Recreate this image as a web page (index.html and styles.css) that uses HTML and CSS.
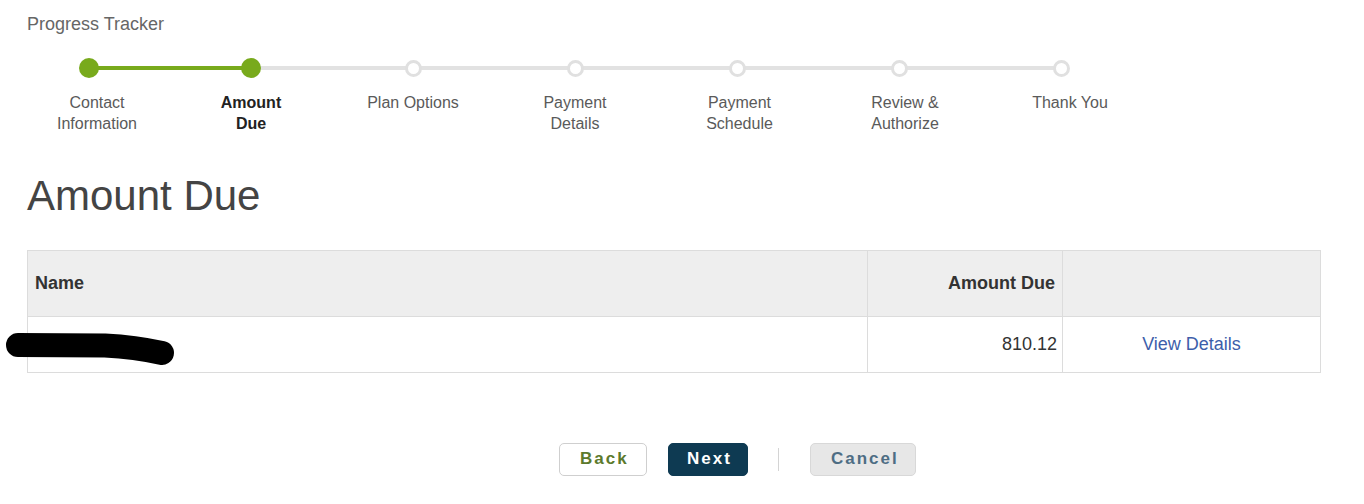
FILE: index.html
```html
<!DOCTYPE html>
<html lang="en">
<head>
<meta charset="utf-8">
<title>Amount Due</title>
<link rel="stylesheet" href="styles.css">
</head>
<body>
<div class="page">
  <div class="tracker-title">Progress Tracker</div>
  <ol class="tracker">
    <li class="step done"><span class="dot"></span><span class="label">Contact<br>Information</span></li>
    <li class="step current"><span class="dot"></span><span class="label">Amount<br>Due</span></li>
    <li class="step"><span class="dot"></span><span class="label">Plan Options</span></li>
    <li class="step"><span class="dot"></span><span class="label">Payment<br>Details</span></li>
    <li class="step"><span class="dot"></span><span class="label">Payment<br>Schedule</span></li>
    <li class="step"><span class="dot"></span><span class="label">Review &amp;<br>Authorize</span></li>
    <li class="step"><span class="dot"></span><span class="label">Thank You</span></li>
  </ol>

  <h1 class="heading">Amount Due</h1>

  <div class="table-wrap">
    <table class="due-table">
      <thead>
        <tr>
          <th class="col-name">Name</th>
          <th class="col-amount">Amount Due</th>
          <th class="col-action"></th>
        </tr>
      </thead>
      <tbody>
        <tr>
          <td class="col-name"></td>
          <td class="col-amount">810.12</td>
          <td class="col-action"><a class="link" href="#">View Details</a></td>
        </tr>
      </tbody>
    </table>
    <svg class="redact" width="190" height="50" viewBox="0 0 190 50" aria-hidden="true">
      <path d="M18 25 L 105 25.5 Q 135 27 162 33" fill="none" stroke="#000" stroke-width="24" stroke-linecap="round" stroke-linejoin="round"/>
    </svg>
  </div>

  <div class="actions">
    <button class="btn btn-back">Back</button>
    <button class="btn btn-next">Next</button>
    <span class="sep"></span>
    <button class="btn btn-cancel">Cancel</button>
  </div>
</div>
</body>
</html>
```

FILE: styles.css
```css
* { box-sizing: border-box; }

html, body {
  margin: 0;
  padding: 0;
  background: #ffffff;
}

body {
  font-family: "Liberation Sans", Arial, sans-serif;
  color: #333;
}

.page {
  padding: 13px 43px 0 27px;
}

.tracker-title {
  font-size: 18px;
  line-height: 22px;
  color: #666;
}

.tracker {
  list-style: none;
  margin: 23px 0 0 -19px;
  padding: 0;
  display: flex;
}

.step {
  position: relative;
  width: 162px;
  display: flex;
  flex-direction: column;
  align-items: center;
}

.step::after {
  content: "";
  position: absolute;
  top: 8px;
  left: 81px;
  width: 162px;
  height: 4px;
  background: #e2e2e2;
  z-index: 0;
}

.step:last-child::after { display: none; }

.step.done::after { background: #78aa1c; }

.dot {
  position: relative;
  z-index: 1;
  width: 17px;
  height: 17px;
  margin-top: 1.5px;
  margin-bottom: 1.5px;
  border-radius: 50%;
  background: #fff;
  border: 3px solid #e0e0e0;
}

.step.done .dot,
.step.current .dot {
  width: 20px;
  height: 20px;
  margin: 0;
  background: #78aa1c;
  border: none;
}

.label {
  margin-top: 14px;
  font-size: 16px;
  line-height: 21px;
  color: #5a5a5a;
  text-align: center;
  white-space: nowrap;
}

.step:first-child .label { margin-left: 16px; }
.step:nth-child(5) .label { margin-left: 5px; }
.step:nth-child(6) .label { margin-left: 12px; }
.step:nth-child(7) .label { margin-left: 18px; }

.step.current .label {
  font-weight: bold;
  color: #222;
}

.heading {
  margin: 38px 0 0 0;
  font-size: 42px;
  line-height: 48px;
  font-weight: normal;
  color: #444;
}

.table-wrap {
  position: relative;
  margin-top: 30px;
}

.due-table {
  width: 100%;
  border-collapse: collapse;
  border: 1px solid #dcdcdc;
  font-size: 18px;
}

.due-table th,
.due-table td {
  border: 1px solid #dcdcdc;
  padding: 0 7px;
}

.due-table thead tr {
  height: 66px;
  background: #eeeeee;
}

.due-table tbody tr { height: 56px; }

.due-table th {
  font-weight: bold;
  color: #333;
  text-align: left;
}

.col-name { width: 840px; }
.col-amount { width: 195px; text-align: right !important; }
.col-action { text-align: center; }

.due-table td.col-amount { padding-right: 5px; color: #333; }

.link {
  color: #3d5eaa;
  text-decoration: none;
}

.redact {
  position: absolute;
  left: -27px;
  top: 70px;
}

.actions {
  display: flex;
  justify-content: center;
  align-items: center;
  margin-top: 70px;
  padding-left: 127px;
}

.btn {
  height: 33px;
  font-family: "Liberation Sans", Arial, sans-serif;
  font-size: 17px;
  font-weight: bold;
  letter-spacing: 2px;
  border-radius: 5px;
  padding: 0 18px 2px 20px;
  cursor: pointer;
}

.btn-back {
  background: #fff;
  border: 1px solid #cfcfcf;
  color: #5c7a2c;
  width: 88px;
}

.btn-next {
  margin-left: 21px;
  background: #0e3a52;
  border: 1px solid #0e3a52;
  color: #fff;
  width: 80px;
  padding: 0 16px 2px 18px;
}

.sep {
  width: 1px;
  height: 23px;
  margin: 0 31px 0 30px;
  background: #d4d4d4;
}

.btn-cancel {
  background: #e7e7e7;
  border: 1px solid #d8d8d8;
  color: #4e6d84;
  width: 106px;
}
```
